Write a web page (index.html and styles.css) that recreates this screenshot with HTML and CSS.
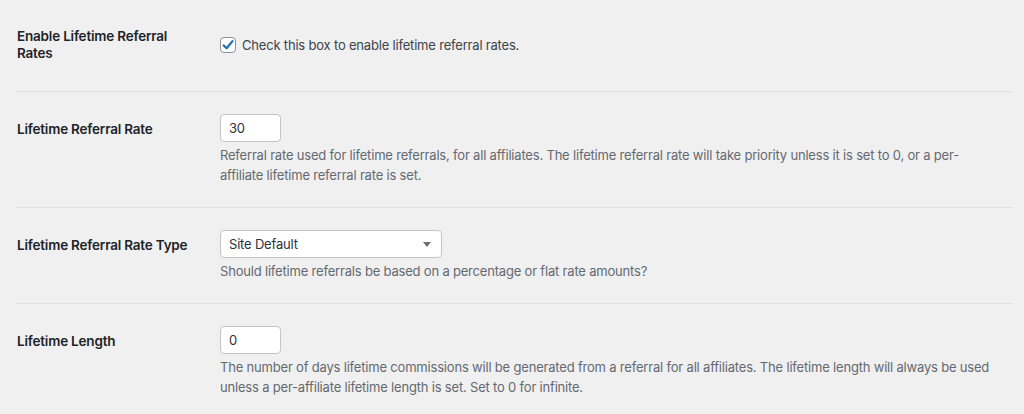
FILE: index.html
```html
<!DOCTYPE html>
<html lang="en">
<head>
<meta charset="utf-8">
<title>Lifetime Referral Settings</title>
<link rel="stylesheet" href="styles.css">
</head>
<body>
<div class="form-table">
  <div class="row row-center">
    <div class="label">Enable Lifetime Referral Rates</div>
    <div class="field">
      <label class="check">
        <span class="checkbox">
          <svg width="14" height="14" viewBox="0 0 14 14"><path d="M2.6 7.4 L5.6 10.3 L11.4 3.2" fill="none" stroke="#2271b1" stroke-width="2.2" stroke-linecap="round" stroke-linejoin="round"/></svg>
        </span>
        <span>Check this box to enable lifetime referral rates.</span>
      </label>
    </div>
  </div>
  <div class="row">
    <div class="label">Lifetime Referral Rate</div>
    <div class="field">
      <div class="input small">30</div>
      <p class="description">Referral rate used for lifetime referrals, for all affiliates. The lifetime referral rate will take priority unless it is set to 0, or a per-affiliate lifetime referral rate is set.</p>
    </div>
  </div>
  <div class="row">
    <div class="label">Lifetime Referral Rate Type</div>
    <div class="field">
      <div class="input select"><span>Site Default</span><span class="arrow"></span></div>
      <p class="description">Should lifetime referrals be based on a percentage or flat rate amounts?</p>
    </div>
  </div>
  <div class="row">
    <div class="label">Lifetime Length</div>
    <div class="field">
      <div class="input small">0</div>
      <p class="description">The number of days lifetime commissions will be generated from a referral for all affiliates. The lifetime length will always be used unless a per-affiliate lifetime length is set. Set to 0 for infinite.</p>
    </div>
  </div>
</div>
</body>
</html>
```
FILE: styles.css
```css
html, body {
  margin: 0;
  padding: 0;
  background: #f0f0f1;
}
body {
  font-family: Inter, "Noto Sans", sans-serif;
  font-size: 13px;
  letter-spacing: -0.19px;
  color: #3c434a;
  padding: 0 11px 0 16px;
  height: 414px;
  overflow: hidden;
}
.row {
  display: grid;
  grid-template-columns: 204px 1fr;
  align-items: start;
  padding: 22px 0;
  border-bottom: 1px solid #e1e1e3;
}
.row-center {
  align-items: center;
  padding: 28px 0 29px;
}
.label {
  font-size: 13.5px;
  letter-spacing: -0.2px;
  font-weight: 600;
  color: #1d2327;
  line-height: 17px;
  padding: 7px 15px 0 1px;
}
.row-center .label {
  padding-top: 0;
}
.field {
  padding-right: 18px;
}
.check {
  display: flex;
  align-items: center;
  gap: 6px;
  line-height: 20px;
}
.checkbox {
  width: 14px;
  height: 14px;
  border: 1px solid #8c8f94;
  border-radius: 4px;
  background: #fff;
  display: flex;
  align-items: center;
  justify-content: center;
}
.input {
  box-sizing: border-box;
  height: 28px;
  background: #fff;
  border: 1px solid #c3c4c7;
  border-radius: 4px;
  padding: 0 8px;
  color: #2c3338;
  line-height: 26px;
}
.small {
  width: 61px;
}
.select {
  width: 222px;
  display: flex;
  justify-content: space-between;
  align-items: center;
}
.arrow {
  width: 0;
  height: 0;
  border-left: 4px solid transparent;
  border-right: 4px solid transparent;
  border-top: 5px solid #6b6f74;
  margin-right: 2px;
}
.description {
  margin: 3px 0 0;
  font-size: 13px;
  line-height: 20px;
  color: #646970;
}
```
